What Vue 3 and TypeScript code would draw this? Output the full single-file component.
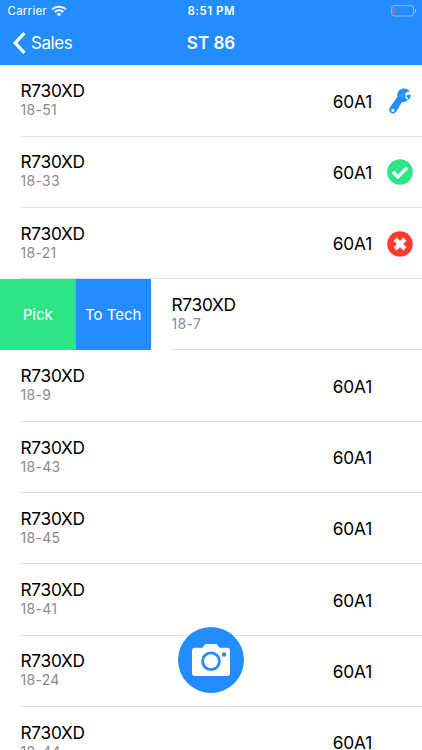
<script setup lang="ts">
type Status = 'repair' | 'ok' | 'error'

interface Item {
  name: string
  code: string
  slot: string
  status?: Status
  open?: boolean
}

const items: Item[] = [
  { name: 'R730XD', code: '18-51', slot: '60A1', status: 'repair' },
  { name: 'R730XD', code: '18-33', slot: '60A1', status: 'ok' },
  { name: 'R730XD', code: '18-21', slot: '60A1', status: 'error' },
  { name: 'R730XD', code: '18-7', slot: '60A1', open: true },
  { name: 'R730XD', code: '18-9', slot: '60A1' },
  { name: 'R730XD', code: '18-43', slot: '60A1' },
  { name: 'R730XD', code: '18-45', slot: '60A1' },
  { name: 'R730XD', code: '18-41', slot: '60A1' },
  { name: 'R730XD', code: '18-24', slot: '60A1' },
  { name: 'R730XD', code: '18-44', slot: '60A1' },
]
</script>

<template>
  <div class="screen">
    <header class="header">
      <div class="statusbar">
        <div class="carrier">
          <span>Carrier</span>
          <svg class="wifi" width="16" height="12" viewBox="0 0 16 12">
            <path d="M1.2 4.3C5 .8 11 .8 14.8 4.3M3.7 6.9c2.4-2.2 6.2-2.2 8.6 0" fill="none" stroke="#fff" stroke-width="2" />
            <path d="M5.6 8.9c1.4-1.2 3.4-1.2 4.8 0L8 11.4z" fill="#fff" />
          </svg>
        </div>
        <span class="time">8:51 PM</span>
        <svg class="battery" width="26" height="12" viewBox="0 0 26 12">
          <rect x=".7" y=".7" width="21.8" height="10.3" rx="2.5" fill="none" stroke="#83bdff" stroke-width="1" />
          <path d="M24 4v4c1.4-.6 1.4-3.4 0-4z" fill="#a2ceff" />
          <rect x="2" y="2.2" width="2.5" height="7.3" rx="1" fill="#a26aa5" />
        </svg>
      </div>
      <nav class="navbar">
        <div class="back">
          <svg width="13" height="22" viewBox="0 0 13 22">
            <path d="M11.4 1.2 2.2 11l9.2 9.8" fill="none" stroke="#fff" stroke-width="3.2" />
          </svg>
          <span>Sales</span>
        </div>
        <h1 class="title">ST 86</h1>
      </nav>
    </header>

    <main class="list">
      <div v-for="item in items" :key="item.code" class="row">
        <div v-if="item.open" class="actions">
          <button class="action pick">Pick</button>
          <button class="action tech">To Tech</button>
        </div>
        <div class="cell">
          <div class="info">
            <div class="name">{{ item.name }}</div>
            <div class="code">{{ item.code }}</div>
          </div>
          <div v-if="!item.open" class="slot">{{ item.slot }}</div>
          <div v-if="!item.open" class="status">
            <svg v-if="item.status === 'repair'" width="26" height="28" viewBox="0 -0.5 26 28">
              <path
                fill="#238cff"
                fill-rule="evenodd"
                d="M22.9 4.4C21.8 1.8 19 .5 16 1c-4 .7-6.200 4-5.500 8L3.200 19.400c-1.400 2-1.300 4.300.3 5.700 1.800 1.500 4.400 1.100 5.600-.9l5.800-9.400c2.600.2 4.800-.7 6-2.700L18.600 10.800l-.4-5 2-1.500zM5.800 21.200a1.600 1.600 0 1 1 0 3.200 1.600 1.600 0 0 1 0-3.200z"
              />
              <path d="m19.400 8.100 4-1.100.3 2.200-1.500 2.600-1.500.4.200-2.100-1.500-.3z" fill="#238cff" />
              <path d="m13.900 7.200.9 2.800M15.600 6.700l.9 2.800" stroke="#7dbaff" stroke-width=".7" />
            </svg>
            <svg v-else-if="item.status === 'ok'" width="26" height="26" viewBox="0 0 26 26">
              <circle cx="13" cy="13" r="12.8" fill="#2fe486" />
              <path d="m5.900 12.900 5 5 9.200-9.200" fill="none" stroke="#fff" stroke-width="3.300" />
            </svg>
            <svg v-else-if="item.status === 'error'" width="26" height="26" viewBox="0 0 26 26">
              <circle cx="13" cy="13" r="12.8" fill="#ff3b30" />
              <path d="m8.100 8.100 9.800 9.800M17.900 8.100l-9.800 9.800" stroke="#fff" stroke-width="4.400" />
            </svg>
          </div>
        </div>
      </div>
    </main>

    <button class="camera" aria-label="Camera">
      <svg width="40" height="34" viewBox="0 0 40 34">
        <path
          fill="#fff"
          d="M4 4.800h7c1.400 0 2-3.800 4-3.800h10c2 0 2.600 3.800 4 3.800h7a3 3 0 0 1 3 3V30a3 3 0 0 1-3 3H4a3 3 0 0 1-3-3V7.800a3 3 0 0 1 3-3z"
        />
        <circle cx="20" cy="18.300" r="8.400" fill="none" stroke="#238cff" stroke-width="2.800" />
        <circle cx="33" cy="11.500" r="2.300" fill="#238cff" />
      </svg>
    </button>
  </div>
</template>

<style>
body {
  overflow: hidden;
}
</style>

<style scoped>
.screen {
  position: relative;
  width: 422px;
  height: 750px;
  overflow: hidden;
  background: #fff;
  color: #000;
  font-family: Inter, 'Liberation Sans', sans-serif;
  white-space: nowrap;
}

button {
  border: 0;
  padding: 0;
  font: inherit;
}

svg {
  display: block;
}

.header {
  height: 65.4px;
  background: #238cff;
  color: #fff;
}

.statusbar {
  display: grid;
  grid-template-columns: 1fr auto 1fr;
  align-items: center;
  height: 22px;
  padding: 0 5px 0 7.5px;
  font-size: 11.5px;
}

.carrier {
  display: flex;
  align-items: center;
  gap: 4px;
  letter-spacing: 0.25px;
}

.time {
  font-weight: 600;
  letter-spacing: 0.5px;
  margin-right: 2px;
}

.battery {
  justify-self: end;
}

.navbar {
  display: grid;
  grid-template-columns: 1fr auto 1fr;
  align-items: center;
  height: 42px;
  padding: 0 13px;
}

.back {
  display: flex;
  align-items: center;
  gap: 5px;
  font-size: 17px;
  letter-spacing: -0.45px;
}

.title {
  margin: 0;
  font-size: 17px;
  font-weight: 600;
}

.row {
  display: flex;
  height: 71.27px;
}

.cell {
  flex: 1;
  display: flex;
  margin-left: 20.5px;
  border-bottom: 1px solid #e1e1e3;
  box-sizing: border-box;
}

.info {
  flex: 1;
  padding-top: 14.8px;
}

.name {
  font-size: 17.3px;
  line-height: 21px;
  letter-spacing: -0.3px;
}

.code {
  font-size: 14px;
  line-height: 17.8px;
  letter-spacing: 0.3px;
  color: #8a8a8d;
}

.slot {
  align-self: center;
  padding-top: 1.6px;
  font-size: 17.3px;
  letter-spacing: -0.2px;
}

.status {
  display: flex;
  align-items: center;
  justify-content: center;
  width: 26px;
  margin: 1px 9px 0 15px;
}

.actions {
  display: flex;
}

.action {
  width: 75.5px;
  color: #fff;
  font-size: 15px;
}

.pick {
  background: #2fe486;
}

.tech {
  background: #238cff;
}

.camera {
  position: absolute;
  left: 178px;
  top: 626.5px;
  display: flex;
  align-items: center;
  justify-content: center;
  width: 66px;
  height: 66px;
  border-radius: 50%;
  background: #238cff;
}
</style>
